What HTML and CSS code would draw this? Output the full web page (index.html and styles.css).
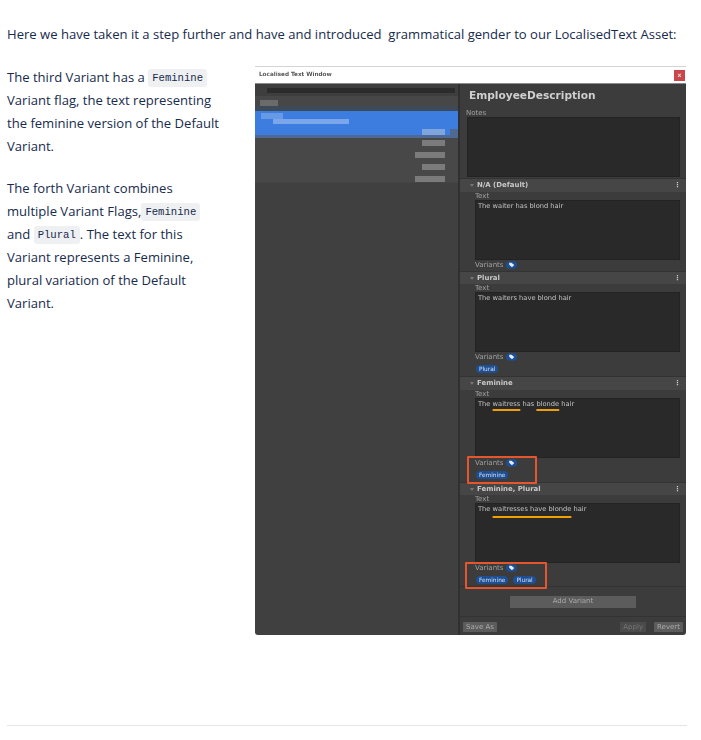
FILE: index.html
```html
<!DOCTYPE html>
<html lang="en">
<head>
<meta charset="utf-8">
<title>Localised Text</title>
<link rel="stylesheet" href="styles.css">
</head>
<body>
<main class="page">
  <p class="intro">Here we have taken it a step further and have and introduced&nbsp; grammatical gender to our LocalisedText Asset:</p>
  <div class="columns">
    <div class="copy">
      <p>The third Variant has a <code>Feminine</code> Variant flag, the text representing the feminine version of the Default Variant.</p>
      <p>The forth Variant combines multiple Variant Flags,<code>Feminine</code> and <code>Plural</code>. The text for this Variant represents a Feminine, plural variation of the Default Variant.</p>
    </div>
    <figure class="shot">
      <div class="titlebar"><span>Localised Text Window</span><b class="close">x</b></div>
      <div class="window">
        <aside class="list">
          <div class="search"><i></i></div>
          <div class="row-head"><i></i></div>
          <div class="selected">
            <i class="sel-a"></i><i class="sel-b"></i>
            <div class="sel-tag"><i></i></div>
          </div>
          <div class="row first"><i class="w1"></i></div>
          <div class="row"><i class="w3"></i></div>
          <div class="row"><i class="w1"></i></div>
          <div class="row last"><i class="w3"></i></div>
        </aside>
        <section class="detail">
          <h2>EmployeeDescription</h2>
          <div class="label notes-label">Notes</div>
          <div class="box notes"></div>

          <div class="variant">
            <h3>N/A (Default)<em>⋮</em></h3>
            <div class="label">Text</div>
            <div class="box">The waiter has blond hair</div>
            <div class="flags short"><div class="label">Variants <svg class="tag" viewBox="0 0 12 8"><rect width="12" height="8" rx="4" fill="#1f4f93"/><path d="M3.500 1.500h2.500l3 2.500-2.500 2.500-3-2.700z" fill="#e4edf9"/></svg></div></div>
          </div>

          <div class="variant slim">
            <h3>Plural<em>⋮</em></h3>
            <div class="label">Text</div>
            <div class="box">The waiters have blond hair</div>
            <div class="flags"><div class="label">Variants <svg class="tag" viewBox="0 0 12 8"><rect width="12" height="8" rx="4" fill="#1f4f93"/><path d="M3.500 1.500h2.500l3 2.500-2.500 2.500-3-2.700z" fill="#e4edf9"/></svg></div>
              <div class="chips"><span>Plural</span></div></div>
          </div>

          <div class="variant">
            <h3>Feminine<em>⋮</em></h3>
            <div class="label">Text</div>
            <div class="box">The <u>waitress</u> has <u>blonde</u> hair</div>
            <div class="flags"><div class="label">Variants <svg class="tag" viewBox="0 0 12 8"><rect width="12" height="8" rx="4" fill="#1f4f93"/><path d="M3.500 1.500h2.500l3 2.500-2.500 2.500-3-2.700z" fill="#e4edf9"/></svg></div>
              <div class="chips"><span>Feminine</span></div>
              <div class="mark mark-one"></div></div>
          </div>

          <div class="variant slim closing">
            <h3>Feminine, Plural<em>⋮</em></h3>
            <div class="label">Text</div>
            <div class="box">The <u class="long">waitresses have blonde</u> hair</div>
            <div class="flags"><div class="label">Variants <svg class="tag" viewBox="0 0 12 8"><rect width="12" height="8" rx="4" fill="#1f4f93"/><path d="M3.500 1.500h2.500l3 2.500-2.500 2.500-3-2.700z" fill="#e4edf9"/></svg></div>
              <div class="chips"><span>Feminine</span><span>Plural</span></div>
              <div class="mark mark-two"></div></div>
          </div>

          <div class="add"><button>Add Variant</button></div>
          <div class="actions"><button>Save As</button><span class="spacer"></span><button class="dim">Apply</button><button>Revert</button></div>
        </section>
      </div>
    </figure>
  </div>
  <hr>
</main>
</body>
</html>
```
FILE: styles.css
```css
* { box-sizing: border-box; }
html, body { margin: 0; background: #fff; }
body { font-family: "Open Sans", "Noto Sans", sans-serif; font-size: 13.07px; line-height: 23px; color: #172b4d; overflow: hidden; }
.page { width: 701px; height: 740px; padding: 23px 14px 0 7px; }
p { margin: 0; }
.intro { white-space: nowrap; }
.columns { display: flex; margin-top: 20px; height: 659px; }
.copy { width: 248px; padding-right: 33px; }
.copy p + p { margin-top: 19px; }
code { font-family: "Liberation Mono", "DejaVu Sans Mono", monospace; font-size: 10.6px; line-height: 1; vertical-align: 1px; background: #eff0f2; border-radius: 3px; padding: 3px 4px; }
.shot { margin: 0; width: 431px; height: 569px; display: flex; flex-direction: column; border-radius: 0 0 3px 3px; overflow: hidden; font-family: "DejaVu Sans", sans-serif; }
.titlebar { height: 17px; flex: none; display: flex; align-items: center; justify-content: space-between; padding: 0 1px 0 4px; background: #fff; border-top: 1px solid #d4d4d4; font-size: 5.7px; font-weight: 700; line-height: 1; color: #555; filter: blur(.35px); }
.close { width: 11px; height: 11px; background: #c9474b; color: #f3d6d6; display: flex; align-items: center; justify-content: center; font-size: 6px; }
.window { flex: 1; display: flex; background: #3c3c3c; border-top: 1px solid #8a8a8a; filter: blur(.55px); min-height: 0; }
.list { width: 205px; flex: none; background: #404040; border-right: 2px solid #303030; }
.list i { display: block; background: #8a8a8a; }
.search { height: 12px; padding: 4px 3px 0 12px; background: #3e3e3e; }
.search i { height: 5px; background: #2b2b2b; }
.row-head { height: 15px; padding: 4px 0 0 5px; background: linear-gradient(#474747 10px, #3f4a58 10px); }
.row-head i { width: 18px; height: 6px; background: #6b6b6b; }
.selected { height: 24px; padding-top: 2px; background: #3d7de0; position: relative; }
.selected::after { content: ""; position: absolute; right: 0; bottom: 0; width: 8px; height: 6px; background: #4e6a94; }
.sel-a { width: 22px; height: 6px; background: #6699e6 !important; margin-left: 6px; }
.sel-b { width: 76px; height: 5px; background: #7ba7ea !important; margin-left: 18px; }
.sel-tag { position: absolute; right: 13px; bottom: 0; display: flex; width: 23px; height: 6px; }
.sel-tag i { width: 100%; background: #7fa6dc; }
.row { height: 12px; flex: none; display: flex; justify-content: flex-end; align-items: center; padding-right: 13px; background: #484848; }
.row.first { background: linear-gradient(#4e6a94 3px, #484848 3px); height: 14px; padding-top: 2px; }
.row.last { height: 10px; padding-top: 2px; border-bottom: 1px solid #444; }
.row i { height: 6px; background: #7b7b7b; }
.w1 { width: 23px; } .w3 { width: 30px; }
.detail { flex: 1; min-width: 0; color: #c4c4c4; display: flex; flex-direction: column; }
.detail > * { flex: none; }
h2 { margin: 4px 0 0 9px; font-size: 10.6px; line-height: 14px; font-weight: 700; color: #cfcfcf; }
.label { font-size: 7px; line-height: 8px; color: #a0a0a0; padding-left: 15px; display: flex; align-items: center; gap: 3px; white-space: nowrap; }
.notes-label { padding-left: 6px; margin-top: 7px; }
.box { margin: 0 6px 0 15px; height: 60px; background: #292929; border: 1px solid #232323; font-size: 6.7px; line-height: 8px; padding: 1px 2px 0; color: #c2c2c2; }
.notes { margin: 0 6px 1px 7px; }
u { text-decoration: underline #f0a000 2px; text-underline-offset: 3px; text-decoration-skip-ink: none; }
u.long { text-underline-offset: 5px; }
.variant { border-top: 1px solid #333; position: relative; }
h3 { margin: 0; height: 13px; background: #464646; font-size: 6.95px; line-height: 13px; font-weight: 700; color: #c8c8c8; padding: 0 5px 0 17px; display: flex; justify-content: space-between; position: relative; }
.slim h3 { height: 12px; line-height: 12px; }
h3::before { content: ""; position: absolute; left: 10px; top: 5px; border: 2px solid transparent; border-top: 3px solid #777; }
h3 em { font-style: normal; }
.flags { height: 24px; padding-top: 1px; position: relative; }
.flags.short { height: 11px; }
.closing .flags { height: 23px; }
.tag { width: 11px; height: 8px; }
.chips { display: flex; gap: 5px; padding: 4px 0 0 16px; }
.chips span { background: #1f4f93; color: #d2e1f6; font-size: 5.8px; line-height: 8px; padding: 0 3px; border-radius: 4px; }
.mark { position: absolute; border: 2px solid #e4572e; border-radius: 1px; left: 7px; top: -2px; height: 28px; z-index: 1; }
.mark-one { width: 70px; }
.mark-two { width: 82px; left: 5px; top: -1px; height: 27px; }
.add { border-top: 1px solid #333; height: 30px; display: flex; justify-content: center; align-items: center; }
button { font: inherit; border: 0; background: #5c5c5c; color: #aaa; font-size: 7px; line-height: 1; padding: 0; border-radius: 1px; }
.add button { width: 126px; height: 12px; }
.actions { border-top: 1px solid #333; flex: 1 1 0 !important; display: flex; align-items: center; gap: 8px; padding: 2px 3px 0; }
.actions button { height: 10px; padding: 0 3px; }
.actions .dim { background: #4b4b4b; color: #777; }
.spacer { flex: 1; }
hr { border: 0; border-top: 1px solid #e2e4e7; margin: 0; width: 680px; }
```
